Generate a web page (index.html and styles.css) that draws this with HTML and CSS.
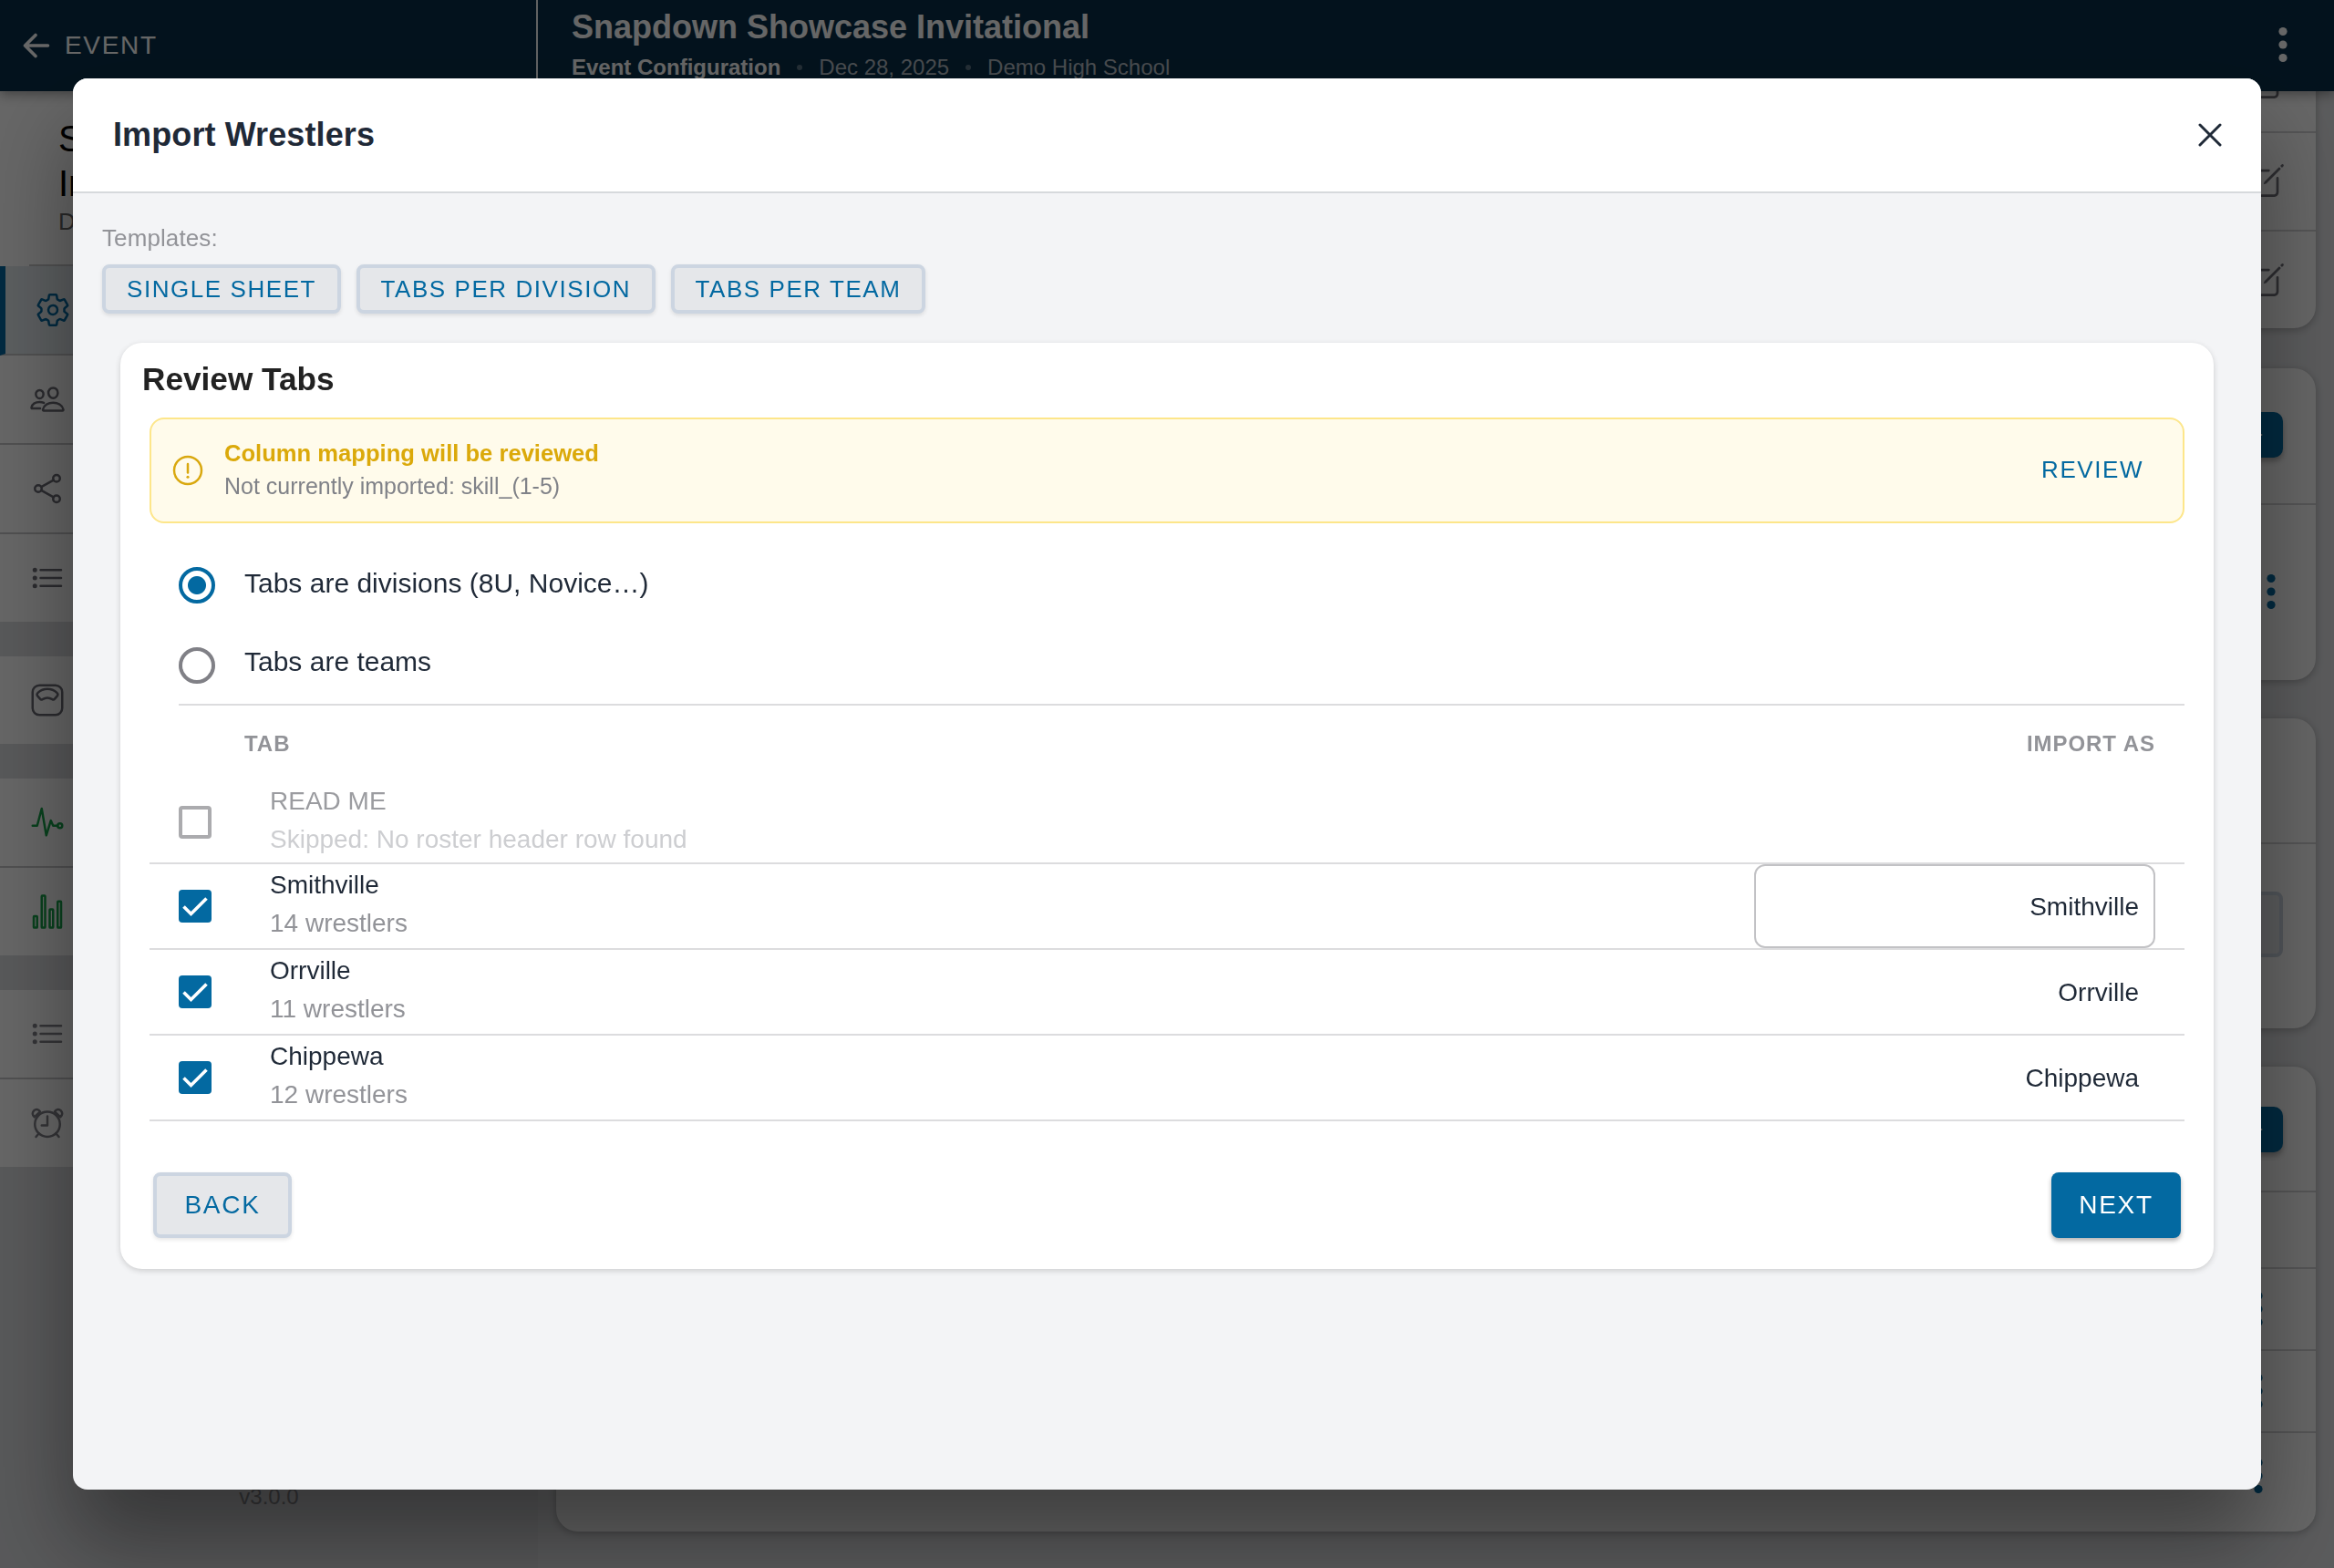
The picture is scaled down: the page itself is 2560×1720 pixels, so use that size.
FILE: index.html
```html
<!DOCTYPE html>
<html lang="en">
<head>
  <meta charset="UTF-8">
  <meta name="viewport" content="width=device-width, initial-scale=1.0">
  <title>Import Wrestlers</title>
  <link rel="stylesheet" href="styles.css">
</head>
<body>
  <!-- shared icons -->
  <svg class="sprite" width="0" height="0">
    <symbol id="i-list" viewBox="0 0 512 512"><path d="M160 144h288M160 256h288M160 368h288"/><circle cx="80" cy="144" r="16"/><circle cx="80" cy="256" r="16"/><circle cx="80" cy="368" r="16"/></symbol>
    <symbol id="i-edit" viewBox="0 0 512 512"><path d="M384 224v184a40 40 0 01-40 40H104a40 40 0 01-40-40V168a40 40 0 0140-40h167.48"/><path class="solid" d="M459.94 53.25a16.06 16.06 0 00-23.22-.56L424.35 65a8 8 0 000 11.31l11.34 11.32a8 8 0 0011.34 0l12.06-12c6.1-6.09 6.67-16.01.85-22.38zM399.34 90L218.82 270.2a9 9 0 00-2.31 3.93L208.16 299a3.91 3.91 0 004.86 4.86l24.85-8.35a9 9 0 003.93-2.31L422 112.66a9 9 0 000-12.66l-9.95-10a9 9 0 00-12.71 0z"/></symbol>
    <symbol id="i-dots" viewBox="0 0 10 40"><circle class="solid" cx="5" cy="5.5" r="4.6"/><circle class="solid" cx="5" cy="20" r="4.6"/><circle class="solid" cx="5" cy="34.5" r="4.6"/></symbol>
    <symbol id="i-check" viewBox="0 0 36 36"><path d="M5.5 18.5l8 8L30.5 9.5"/></symbol>
    <symbol id="i-add" viewBox="0 0 24 24"><path d="M12 2v20M2 12h20"/></symbol>
  </svg>

  <header class="topbar">
    <div class="topbar-back">
      <svg class="back-arrow" viewBox="0 0 30 28"><path d="M14 2.5L2.5 14 14 25.5M3 14h24.5"/></svg>
      <span>EVENT</span>
    </div>
    <div class="topbar-title">
      <h1>Snapdown Showcase Invitational</h1>
      <p><strong>Event Configuration</strong><i></i><span>Dec 28, 2025</span><i></i><span>Demo High School</span></p>
    </div>
    <svg class="dots topbar-dots"><use href="#i-dots"/></svg>
  </header>

  <div class="layout">
    <aside class="sidebar">
      <div class="event-info">
        <h2>Snapdown Showcase Invitational</h2>
        <p>Dec 28, 2025</p>
        <hr>
      </div>
      <nav>
        <div class="nav-group">
          <a class="nav-item active"><svg class="icon" viewBox="0 0 512 512"><path d="M262.29 192.31a64 64 0 1057.4 57.4 64.13 64.13 0 00-57.4-57.4zM416.39 256a154.34 154.34 0 01-1.53 20.79l45.21 35.46a10.81 10.81 0 012.45 13.75l-42.77 74a10.81 10.81 0 01-13.14 4.59l-44.9-18.08a16.11 16.11 0 00-15.17 1.75A164.48 164.48 0 01325 400.8a15.94 15.94 0 00-8.82 12.14l-6.73 47.89a11.08 11.08 0 01-10.68 9.17h-85.54a11.11 11.11 0 01-10.69-8.87l-6.72-47.82a16.07 16.07 0 00-9-12.22 155.3 155.3 0 01-21.46-12.57 16 16 0 00-15.11-1.71l-44.89 18.07a10.81 10.81 0 01-13.14-4.58l-42.77-74a10.8 10.8 0 012.45-13.75l38.21-30a16.05 16.05 0 006-14.08c-.36-4.17-.58-8.33-.58-12.5s.21-8.27.58-12.35a16 16 0 00-6.07-13.94l-38.19-30A10.81 10.81 0 0149.48 186l42.77-74a10.81 10.81 0 0113.14-4.59l44.9 18.08a16.11 16.11 0 0015.17-1.75A164.48 164.48 0 01187 111.2a15.94 15.94 0 008.82-12.14l6.73-47.89A11.08 11.08 0 01213.23 42h85.54a11.11 11.11 0 0110.69 8.87l6.72 47.82a16.07 16.07 0 009 12.22 155.3 155.3 0 0121.46 12.57 16 16 0 0015.11 1.71l44.89-18.07a10.81 10.81 0 0113.14 4.58l42.77 74a10.8 10.8 0 01-2.45 13.75l-38.21 30a16.05 16.05 0 00-6.05 14.08c.33 4.14.55 8.3.55 12.47z"/></svg></a>
          <a class="nav-item"><svg class="icon" viewBox="0 0 512 512"><path d="M402 168c-2.93 40.67-33.1 72-66 72s-63.12-31.32-66-72c-3-42.31 26.37-72 66-72s69 30.46 66 72z"/><path d="M336 304c-65.17 0-127.84 32.37-143.54 95.41-2.08 8.34 3.15 16.59 11.72 16.59h263.65c8.57 0 13.77-8.25 11.72-16.59C463.85 335.36 401.18 304 336 304z"/><path d="M200 185.94c-2.34 32.48-26.72 58.06-53 58.06s-50.7-25.57-53-58.06C91.61 152.15 115.34 128 147 128s55.39 24.77 53 57.94z"/><path d="M206 306c-18.05-8.27-37.93-11.45-59-11.45-52 0-102.1 25.85-114.65 76.2-1.65 6.66 2.53 13.25 9.37 13.25H154"/></svg></a>
          <a class="nav-item"><svg class="icon" viewBox="0 0 512 512"><circle cx="128" cy="256" r="48"/><circle cx="384" cy="112" r="48"/><circle cx="384" cy="400" r="48"/><path d="M169.83 279.53l172.34 96.94M342.17 135.53l-172.34 96.94"/></svg></a>
          <a class="nav-item"><svg class="icon"><use href="#i-list"/></svg></a>
        </div>
        <div class="nav-group">
          <a class="nav-item"><svg class="icon" viewBox="0 0 512 512"><rect x="48" y="48" width="416" height="416" rx="96"/><path d="M388.94 151.56c-24.46-22.28-68.72-51.4-132.94-51.4s-108.48 29.12-132.94 51.4a34.66 34.66 0 00-3.06 48.08l33.32 39.21a26.07 26.07 0 0033.6 5.21c15.92-9.83 40.91-21.64 69.1-21.64s53.18 11.81 69.1 21.64a26.07 26.07 0 0033.6-5.21L392 199.64a34.66 34.66 0 00-3.06-48.08z"/></svg></a>
        </div>
        <div class="nav-group green">
          <a class="nav-item"><svg class="icon" viewBox="0 0 512 512"><path d="M48 304h64l64-240 64 376 64-208 32 72h64"/><circle cx="432" cy="304" r="32"/></svg></a>
          <a class="nav-item"><svg class="icon" viewBox="0 0 512 512"><rect x="64" y="320" width="48" height="160" rx="8"/><rect x="288" y="224" width="48" height="256" rx="8"/><rect x="400" y="112" width="48" height="368" rx="8"/><rect x="176" y="32" width="48" height="448" rx="8"/></svg></a>
        </div>
        <div class="nav-group muted">
          <a class="nav-item"><svg class="icon"><use href="#i-list"/></svg></a>
          <a class="nav-item"><svg class="icon" viewBox="0 0 512 512"><circle cx="256" cy="272" r="176"/><path d="M256 160v128h-80M416 448l-40.8-48M96 448l40.8-48"/><path d="M154 95c-24-38-64-38-88-14s-26 58 8 90zM358 95c24-38 64-38 88-14s26 58-8 90z"/></svg></a>
        </div>
      </nav>
      <p class="version">v3.0.0</p>
    </aside>

    <main class="content">
      <section class="panel panel-top">
        <div class="panel-row"><svg class="edit"><use href="#i-edit"/></svg></div>
        <div class="panel-row"><svg class="edit"><use href="#i-edit"/></svg></div>
        <div class="panel-row"><svg class="edit"><use href="#i-edit"/></svg></div>
      </section>
      <section class="panel panel-actions">
        <div class="panel-row panel-head"><span class="add-btn"><svg><use href="#i-add"/></svg></span></div>
        <div class="panel-row"><svg class="dots"><use href="#i-dots"/></svg></div>
      </section>
      <section class="panel panel-grey">
        <div class="panel-row panel-head"></div>
        <div class="panel-row"><span class="grey-btn"></span></div>
      </section>
      <section class="panel panel-list">
        <div class="panel-row panel-head"><span class="add-btn"><svg><use href="#i-add"/></svg></span></div>
        <div class="panel-row short"></div>
        <div class="panel-row mid"><svg class="dots"><use href="#i-dots"/></svg></div>
        <div class="panel-row mid"><svg class="dots"><use href="#i-dots"/></svg></div>
        <div class="panel-row"><svg class="dots"><use href="#i-dots"/></svg></div>
      </section>
    </main>
  </div>

  <div class="backdrop">
    <div class="modal">
      <div class="modal-header">
        <h2>Import Wrestlers</h2>
        <svg class="close" viewBox="0 0 26 26"><path d="M2 2l22 22M24 2L2 24"/></svg>
      </div>
      <div class="modal-body">
        <p class="templates-label">Templates:</p>
        <div class="templates">
          <button class="btn outline small">SINGLE SHEET</button>
          <button class="btn outline small">TABS PER DIVISION</button>
          <button class="btn outline small">TABS PER TEAM</button>
        </div>

        <section class="review">
          <h3>Review Tabs</h3>
          <div class="alert">
            <svg class="alert-icon" viewBox="0 0 512 512"><circle cx="256" cy="256" r="192"/><path d="M256 166v122"/><circle class="solid" cx="256" cy="348" r="20"/></svg>
            <div class="alert-text">
              <strong>Column mapping will be reviewed</strong>
              <span>Not currently imported: skill_(1-5)</span>
            </div>
            <a class="alert-link">REVIEW</a>
          </div>

          <div class="options">
            <label class="option"><span class="radio checked"></span><span class="option-text">Tabs are divisions (8U, Novice…)</span></label>
            <label class="option"><span class="radio"></span><span class="option-text">Tabs are teams</span></label>
          </div>

          <div class="sheet-head"><span>TAB</span><span>IMPORT AS</span></div>
          <div class="sheet disabled">
            <span class="checkbox"></span>
            <div class="sheet-name"><span>READ ME</span><small>Skipped: No roster header row found</small></div>
          </div>
          <div class="sheet">
            <span class="checkbox checked"><svg><use href="#i-check"/></svg></span>
            <div class="sheet-name"><span>Smithville</span><small>14 wrestlers</small></div>
            <div class="import-as focused">Smithville</div>
          </div>
          <div class="sheet">
            <span class="checkbox checked"><svg><use href="#i-check"/></svg></span>
            <div class="sheet-name"><span>Orrville</span><small>11 wrestlers</small></div>
            <div class="import-as">Orrville</div>
          </div>
          <div class="sheet">
            <span class="checkbox checked"><svg><use href="#i-check"/></svg></span>
            <div class="sheet-name"><span>Chippewa</span><small>12 wrestlers</small></div>
            <div class="import-as">Chippewa</div>
          </div>

          <div class="actions">
            <button class="btn outline back">BACK</button>
            <button class="btn primary">NEXT</button>
          </div>
        </section>
      </div>
    </div>
  </div>
</body>
</html>
```

FILE: styles.css
```css
* {
  box-sizing: border-box;
}
body {
  margin: 0;
  width: 2560px;
  height: 1720px;
  overflow: hidden;
  font-family: "Liberation Sans", Arial, sans-serif;
  color: #1f2937;
  background: #e2e3e6;
}
h1, h2, h3, p {
  margin: 0;
}
svg {
  display: block;
  flex: none;
  fill: none;
  stroke: currentColor;
  stroke-linecap: round;
  stroke-linejoin: round;
}
.sprite {
  position: absolute;
}
.solid {
  fill: currentColor;
  stroke: none;
}

/* top bar */
.topbar {
  position: relative;
  z-index: 1;
  display: flex;
  height: 100px;
  background: #082f49;
  color: #fff;
  box-shadow: 0 4px 12px rgba(0, 0, 0, 0.35);
}
.topbar-back {
  display: flex;
  align-items: center;
  gap: 16px;
  width: 590px;
  padding: 0 0 1px 25px;
  border-right: 2px solid #f3f4f6;
  font-size: 28px;
  letter-spacing: 0.06em;
}
.back-arrow {
  width: 30px;
  height: 28px;
  stroke-width: 3.6;
}
.topbar-title {
  flex: 1;
  padding: 8px 0 0 37px;
}
.topbar-title h1 {
  font-size: 36px;
  line-height: 44px;
}
.topbar-title p {
  display: flex;
  align-items: center;
  gap: 18px;
  font-size: 24px;
  line-height: 44px;
  color: #b4bdc5;
}
.topbar-title strong {
  color: #fff;
}
.topbar-title i {
  width: 6px;
  height: 6px;
  border-radius: 50%;
  background: #5b7384;
}
.dots {
  width: 10px;
  height: 40px;
  color: #0369a1;
}
.topbar-dots {
  margin: 29px 51px 0 0;
  color: #fff;
}

.layout {
  display: flex;
  height: 1620px;
}

/* sidebar */
.sidebar {
  width: 590px;
  background: #dcdde0;
}
.event-info {
  display: flex;
  flex-direction: column;
  height: 192px;
  padding: 28px 0 0 64px;
  background: #fff;
  color: #000;
}
.event-info h2 {
  width: 420px;
  font-size: 40px;
  font-weight: normal;
  line-height: 49px;
}
.event-info p {
  margin-top: -1px;
  font-size: 26px;
  line-height: 36px;
  color: #666;
}
.event-info hr {
  width: 558px;
  height: 2px;
  margin: auto 0 0 -32px;
  border: 0;
  background: #c8c8ca;
}
.nav-group {
  margin-bottom: 38px;
  background: #fff;
}
.nav-item {
  display: flex;
  align-items: center;
  height: 98px;
  padding-left: 32px;
  border-bottom: 2px solid #c8c8ca;
  color: #6b6b74;
}
.nav-item:last-child {
  height: 96px;
  border-bottom: 0;
}
.nav-item.active {
  border-left: 6px solid #0369a1;
  background: #e3eaee;
  color: #0369a1;
}
.green .nav-item {
  color: #16a34a;
}
.muted .nav-item {
  color: #808088;
}
.icon {
  width: 40px;
  height: 40px;
  stroke-width: 32;
}
.version {
  padding-top: 310px;
  font-size: 24px;
  line-height: 28px;
  text-align: center;
  color: #8a8a90;
}

/* page behind the modal */
.content {
  flex: 1;
  padding: 0 20px;
}
.panel {
  overflow: hidden;
  border-radius: 24px;
  background: #fff;
  box-shadow: 0 2px 8px rgba(0, 0, 0, 0.25);
}
.panel-row {
  display: flex;
  align-items: center;
  justify-content: flex-end;
  border-bottom: 2px solid #d4d4d6;
}
.panel-row:last-child {
  border-bottom: 0;
}
.panel-top {
  height: 322px;
  margin-top: -62px;
  margin-bottom: 44px;
}
.panel-top .panel-row {
  height: 108px;
  padding: 0 31px 2px 0;
}
.edit {
  width: 44px;
  height: 44px;
  stroke-width: 32;
  color: #71717a;
}
.panel-actions {
  height: 342px;
  margin-bottom: 42px;
}
.panel-actions .panel-head {
  height: 150px;
  padding-bottom: 2px;
}
.panel-actions .panel-row:last-child {
  height: 192px;
  padding: 0 44px 2px 0;
}
.panel-head {
  padding-right: 36px;
}
.add-btn {
  display: flex;
  align-items: center;
  justify-content: flex-end;
  width: 120px;
  height: 50px;
  padding-right: 22px;
  border-radius: 10px;
  background: #0369a1;
  color: #fff;
  box-shadow: 0 4px 6px rgba(0, 0, 0, 0.3);
}
.add-btn svg {
  width: 20px;
  height: 20px;
  stroke-width: 2.6;
}
.panel-grey {
  height: 340px;
  margin-bottom: 42px;
}
.panel-grey .panel-head {
  height: 138px;
}
.panel-grey .panel-row:last-child {
  height: 176px;
  padding-right: 36px;
}
.grey-btn {
  width: 160px;
  height: 72px;
  border: 4px solid #cbd5e1;
  border-radius: 8px;
  background: #e5e7eb;
}
.panel-list {
  height: 510px;
}
.panel-list .panel-head {
  height: 138px;
  padding-top: 2px;
}
.panel-list .short {
  height: 84px;
}
.panel-list .mid {
  height: 90px;
  padding-right: 58px;
}
.panel-list .panel-row:last-child {
  height: 94px;
  padding-right: 58px;
}

/* modal */
.backdrop {
  position: fixed;
  inset: 0;
  z-index: 10;
  display: flex;
  align-items: center;
  justify-content: center;
  background: rgba(0, 0, 0, 0.6);
}
.modal {
  width: 2400px;
  height: 1548px;
  overflow: hidden;
  border-radius: 16px;
  background: #f3f4f6;
  box-shadow: 0 56px 96px rgba(0, 0, 0, 0.4);
}
.modal-header {
  display: flex;
  align-items: center;
  justify-content: space-between;
  height: 126px;
  padding: 0 43px 1px 44px;
  border-bottom: 2px solid #d6d9dc;
  background: #fff;
}
.modal-header h2 {
  font-size: 36px;
  letter-spacing: 0.1px;
}
.close {
  width: 26px;
  height: 26px;
  stroke-width: 3;
}
.modal-body {
  padding: 31px 32px 0;
}
.templates-label {
  font-size: 26px;
  line-height: 36px;
  letter-spacing: 0.1px;
  color: #929398;
}
.templates {
  display: flex;
  gap: 16.5px;
  margin-top: 11px;
}
.btn {
  border: 0;
  border-radius: 8px;
  font-family: inherit;
  font-size: 28px;
  letter-spacing: 0.06em;
}
.btn.outline {
  border: 4px solid #ccd5e1;
  background: #e5e7ea;
  color: #0369a1;
  box-shadow: 0 2px 4px rgba(0, 0, 0, 0.1);
}
.btn.small {
  height: 54px;
  padding: 0 23px;
  font-size: 26px;
}
.btn.back {
  width: 152px;
  height: 72px;
}
.btn.primary {
  width: 142px;
  height: 72px;
  background: #0369a1;
  color: #fff;
  box-shadow: 0 3px 5px rgba(0, 0, 0, 0.3);
}

.review {
  height: 1016px;
  margin: 32px 20px 0;
  padding: 20px 32px 0;
  border-radius: 24px;
  background: #fff;
  box-shadow: 0 2px 6px rgba(0, 0, 0, 0.16);
}
.review h3 {
  margin: 0 0 22px -8px;
  font-size: 35.2px;
  line-height: 40px;
  color: #222;
}
.alert {
  display: flex;
  align-items: center;
  gap: 20px;
  height: 116px;
  padding: 0 43px 0 20px;
  border: 2px solid #fde68a;
  border-radius: 16px;
  background: #fffbeb;
}
.alert-icon {
  width: 40px;
  height: 40px;
  stroke-width: 32;
  color: #d9a80f;
}
.alert-text {
  flex: 1;
  padding-bottom: 2px;
  line-height: 36px;
}
.alert-text strong,
.alert-text span {
  display: block;
}
.alert-text strong {
  font-size: 25.6px;
  color: #dba90a;
}
.alert-text span {
  font-size: 25px;
  color: #808288;
}
.alert-link {
  padding-bottom: 2px;
  font-size: 26px;
  letter-spacing: 0.06em;
  color: #0369a1;
}

.options {
  margin: 24px 0 0 32px;
  border-bottom: 2px solid #dcdcde;
}
.option {
  display: flex;
  align-items: flex-start;
  gap: 32px;
  height: 88px;
  padding-top: 24px;
}
.option:last-child {
  height: 86px;
}
.radio {
  width: 40px;
  height: 40px;
  border: 4px solid #808086;
  border-radius: 50%;
}
.radio.checked {
  border-color: #0369a1;
  background: radial-gradient(#0369a1 9.5px, #fff 10.5px);
}
.option-text {
  margin-top: -6px;
  font-size: 30px;
  line-height: 44px;
}
.option:first-child .option-text {
  margin-top: -4px;
}

.sheet-head {
  display: flex;
  align-items: center;
  justify-content: space-between;
  height: 82px;
  padding: 1px 32px 0 104px;
  font-size: 24px;
  font-weight: bold;
  letter-spacing: 0.04em;
  color: #929398;
}
.sheet {
  display: flex;
  height: 94px;
  padding: 0 32px;
  border-bottom: 2px solid #dcdcde;
}
.sheet.disabled {
  height: 92px;
}
.checkbox {
  width: 36px;
  height: 36px;
  margin: 28px 64px 0 0;
  border: 4px solid #ababae;
  border-radius: 4px;
}
.checkbox.checked {
  border: 0;
  background: #0369a1;
  color: #fff;
}
.checkbox svg {
  width: 36px;
  height: 36px;
  stroke-width: 3.6;
  stroke-linecap: butt;
  stroke-linejoin: miter;
}
.sheet-name {
  flex: 1;
  padding-top: 2px;
  font-size: 28px;
  line-height: 42px;
}
.sheet-name span,
.sheet-name small {
  display: block;
  font-size: 28px;
}
.sheet-name small {
  color: #929398;
}
.disabled .sheet-name span {
  color: #9b9ca0;
}
.disabled .sheet-name small {
  color: #cdced1;
}
.import-as {
  width: 440px;
  height: 92px;
  padding-right: 16px;
  border: 2px solid transparent;
  border-radius: 12px;
  font-size: 28px;
  line-height: 90px;
  text-align: right;
}
.import-as.focused {
  border-color: #c2c2c5;
}
.actions {
  display: flex;
  justify-content: space-between;
  margin-top: 56px;
  padding: 0 4px;
}
```
